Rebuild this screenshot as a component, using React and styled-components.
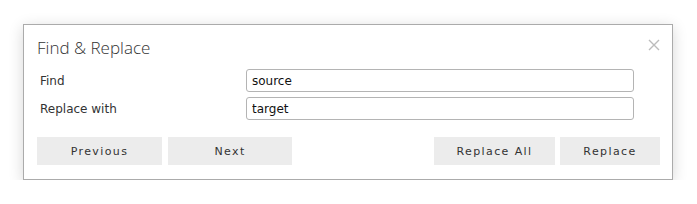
import styled, { createGlobalStyle } from 'styled-components'

const Global = createGlobalStyle`
  html, body {
    margin: 0;
    background: #fff;
  }
`

const Page = styled.div`
  padding: 24px 0 0 23px;
`

const Dialog = styled.div`
  box-sizing: border-box;
  width: 650px;
  height: 156px;
  border: 1px solid #ababab;
  background: #fff;
  box-shadow: 0 3px 14px rgba(0, 0, 0, 0.16);
  padding: 12px 12px 14px 13px;
  display: flex;
  flex-direction: column;
`

const Header = styled.div`
  display: flex;
  justify-content: space-between;
  align-items: flex-start;
  height: 22px;
  margin-bottom: 10px;
`

const Title = styled.h2`
  margin: 0;
  font-family: "Open Sans", sans-serif;
  font-weight: 300;
  font-size: 17px;
  line-height: 22px;
  color: #333;
`

const Close = styled.button`
  border: none;
  background: none;
  padding: 0;
  margin-top: 2px;
  width: 12px;
  height: 12px;
  cursor: pointer;
  display: flex;
`

const Form = styled.div`
  display: grid;
  grid-template-columns: 209px 388px;
  row-gap: 5px;
  align-items: center;
`

const Label = styled.label`
  padding-left: 3px;
  font-family: "DejaVu Sans", sans-serif;
  font-size: 12px;
  color: #333;
`

const Input = styled.input`
  box-sizing: border-box;
  height: 23px;
  width: 100%;
  margin: 0;
  border: 1px solid #b4b4b4;
  border-radius: 3px;
  padding: 0 5px;
  font-family: "DejaVu Sans", sans-serif;
  font-size: 12px;
  color: #111;
  outline: none;
`

const Actions = styled.div`
  display: flex;
  justify-content: space-between;
  margin-top: 17px;
`

const Group = styled.div`
  display: flex;
  gap: ${p => p.$gap}px;
`

const Button = styled.button`
  width: ${p => p.$w}px;
  height: 28px;
  border: none;
  border-radius: 0;
  background: #ececec;
  font-family: "DejaVu Sans", sans-serif;
  font-size: 11px;
  letter-spacing: 1.4px;
  color: #333;
  cursor: pointer;

  &:hover {
    background: #e2e2e2;
  }
`

export default function App() {
  return (
    <>
      <Global />
      <Page>
        <Dialog>
          <Header>
            <Title>Find &amp; Replace</Title>
            <Close aria-label="Close">
              <svg width="12" height="12" viewBox="0 0 12 12">
                <path d="M1 1 L11 11 M11 1 L1 11" stroke="#bcbcbc" strokeWidth="1.4" />
              </svg>
            </Close>
          </Header>
          <Form>
            <Label>Find</Label>
            <Input defaultValue="source" />
            <Label>Replace with</Label>
            <Input defaultValue="target" />
          </Form>
          <Actions>
            <Group $gap={6}>
              <Button $w={125}>Previous</Button>
              <Button $w={124}>Next</Button>
            </Group>
            <Group $gap={5}>
              <Button $w={121}>Replace All</Button>
              <Button $w={100}>Replace</Button>
            </Group>
          </Actions>
        </Dialog>
      </Page>
    </>
  )
}
